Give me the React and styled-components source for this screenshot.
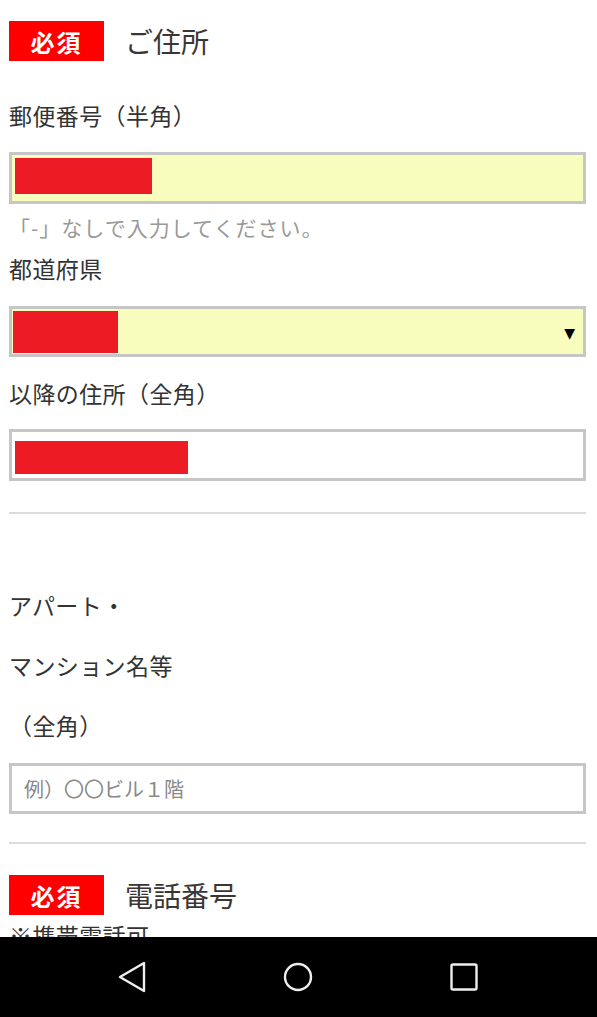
import React from "react";
import styled, { createGlobalStyle } from "styled-components";

const Global = createGlobalStyle`
  html, body { margin: 0; padding: 0; background: #fff; }
  body { font-family: "Noto Sans CJK JP", "Noto Sans", sans-serif; color: #333; }
  * { box-sizing: border-box; }
`;

const Page = styled.div`
  width: 597px;
  height: 1017px;
  overflow: hidden;
  position: relative;
  background: #fff;
`;

const Form = styled.div`
  padding: 21px 11px 0 9px;
  display: flex;
  flex-direction: column;
`;

const Header = styled.div`
  display: flex;
  align-items: center;
  gap: 21px;
  height: 40px;
  margin-top: ${(p) => p.$mt || 0}px;
`;

const Badge = styled.span`
  width: 95px;
  height: 40px;
  background: #ff0000;
  color: #fff;
  font-weight: 700;
  font-size: 24px;
  letter-spacing: 2px;
  display: flex;
  align-items: center;
  justify-content: center;
`;

const Title = styled.h2`
  margin: 0;
  font-size: 28px;
  font-weight: 400;
  color: #3b3634;
  line-height: 40px;
`;

const Label = styled.div`
  font-size: 23px;
  letter-spacing: 0.4px;
  line-height: ${(p) => p.$lh || 30}px;
  color: #333;
  margin-top: ${(p) => p.$mt || 0}px;
`;

const Help = styled.div`
  font-size: 21px;
  letter-spacing: 1px;
  line-height: 26px;
  color: #999;
  margin-top: ${(p) => p.$mt || 0}px;
`;

const Field = styled.div`
  position: relative;
  height: ${(p) => p.$h || 52}px;
  margin-top: ${(p) => p.$mt || 0}px;
  border: 3px solid #c6c6c6;
  background: ${(p) => (p.$filled ? "#f8fcbd" : "#fff")};
  display: flex;
  align-items: ${(p) => p.$align || "flex-start"};
  padding: ${(p) => p.$pad || "0"};
`;

const Redact = styled.div`
  background: #ed1c24;
  flex: none;
`;

const Arrow = styled.span`
  margin-left: auto;
  margin-right: 8px;
  align-self: center;
  font-size: 14px;
  color: #000;
  font-family: "DejaVu Sans", sans-serif;
`;

const Placeholder = styled.span`
  font-size: 20px;
  color: #888;
  padding-left: 12px;
`;

const Divider = styled.hr`
  margin: ${(p) => p.$mt || 0}px 0 0;
  border: none;
  height: 2px;
  background: #dcdcdc;
`;

const NavBar = styled.nav`
  position: absolute;
  left: 0;
  right: 0;
  bottom: 0;
  height: 80px;
  background: #000;
  display: grid;
  grid-template-columns: 1fr 1fr 1fr;
  align-items: center;
  justify-items: center;
  padding: 0 50px;
`;

const NavIcon = styled.svg`
  width: 32px;
  height: 32px;
  display: block;
`;

export default function App() {
  return (
    <Page>
      <Global />
      <Form>
        <Header>
          <Badge>必須</Badge>
          <Title>ご住所</Title>
        </Header>

        <Label $mt={39}>郵便番号（半角）</Label>
        <Field $mt={22} $h={52} $filled $pad="3px 0 0 3px">
          <Redact style={{ width: 137, height: 36 }} />
        </Field>
        <Help $mt={10}>「-」なしで入力してください。</Help>

        <Label $mt={13}>都道府県</Label>
        <Field $mt={23} $h={51} $filled $pad="2px 0 0 1px">
          <Redact style={{ width: 105, height: 42 }} />
          <Arrow>▼</Arrow>
        </Field>

        <Label $mt={21}>以降の住所（全角）</Label>
        <Field $mt={21} $h={52} $pad="9px 0 0 3px">
          <Redact style={{ width: 173, height: 33 }} />
        </Field>

        <Divider $mt={31} />

        <Label $mt={61} $lh={60}>
          アパート・
          <br />
          マンション名等
          <br />
          （全角）
        </Label>
        <Field $mt={8} $h={51} $align="center">
          <Placeholder>例）〇〇ビル１階</Placeholder>
        </Field>

        <Divider $mt={28} />

        <Header $mt={31}>
          <Badge>必須</Badge>
          <Title>電話番号</Title>
        </Header>
        <Label $mt={5}>※携帯電話可</Label>
      </Form>

      <NavBar>
        <NavIcon viewBox="0 0 32 32">
          <path
            d="M27 2 L27 30 L3 16 Z"
            fill="none"
            stroke="#eee"
            strokeWidth="2.4"
            strokeLinejoin="round"
          />
        </NavIcon>
        <NavIcon viewBox="0 0 32 32">
          <circle cx="16" cy="16" r="13" fill="none" stroke="#eee" strokeWidth="2.4" />
        </NavIcon>
        <NavIcon viewBox="0 0 32 32">
          <rect x="3.5" y="3.5" width="25" height="25" rx="1.5" fill="none" stroke="#eee" strokeWidth="2.4" />
        </NavIcon>
      </NavBar>
    </Page>
  );
}
